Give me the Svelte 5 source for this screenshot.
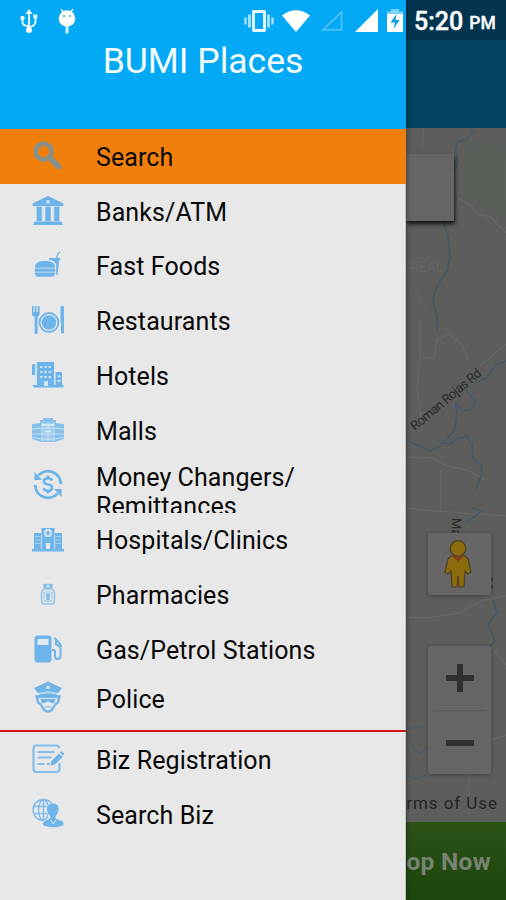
<script lang="ts">
  const places = [
    { icon: 'search', label: 'Search' },
    { icon: 'bank', label: 'Banks/ATM' },
    { icon: 'burger', label: 'Fast Foods' },
    { icon: 'plate', label: 'Restaurants' },
    { icon: 'hotel', label: 'Hotels' },
    { icon: 'mall', label: 'Malls' },
    { icon: 'money', label: 'Money Changers/ Remittances' },
    { icon: 'hospital', label: 'Hospitals/Clinics' },
    { icon: 'pharmacy', label: 'Pharmacies' },
    { icon: 'gas', label: 'Gas/Petrol Stations' },
    { icon: 'police', label: 'Police' },
  ]

  const business = [
    { icon: 'register', label: 'Biz Registration' },
    { icon: 'people', label: 'Search Biz' },
  ]

  let selected = $state('search')
</script>

{#snippet glyph(name: string)}
  <svg class="icon" viewBox="0 0 36 36">
    {#if name === 'search'}
      <circle cx="13.500" cy="13.500" r="8" fill="none" stroke="#86918d" stroke-width="4.400" />
      <path d="M9.500 13.500a4.500 4.500 0 0 1 4-4" fill="none" stroke="#a58c62" stroke-width="1" />
      <path d="M20 20l8.500 8.500" stroke="#86918d" stroke-width="6" stroke-linecap="round" />
    {:else if name === 'bank'}
      <path d="M18 3L33.500 10.500V13h-31v-2.500zM7 14h4.500v14H7zM15.500 14h5v14h-5zM24.500 14H29v14h-4.500zM4.500 28.500h27l1.500 3.500H3z" />
      <path d="M6 12.500h6.500v16H6zM15 12.500h6v16h-6zM23.500 12.500H30v16h-6.500z" opacity=".4" />
      <circle cx="18" cy="9" r="1.900" fill="#c5def1" />
    {:else if name === 'burger'}
      <g transform="translate(0 1)">
        <path d="M5 19.500c0-5 4-6.500 10-6.500s10 1.500 10 6.500zM4.700 21h20.600v2.500H4.700zM5 25h20c0 2.500-1 3.800-3 3.800H8c-2 0-3-1.300-3-3.800z" />
        <path d="M5 19h20v7H5z" opacity=".5" />
        <path d="M18.500 10h11.800v2h-1l-1.800 15h-1.300V17c-.800-3-3-4.500-6.500-5z" />
        <path d="M26.500 10l1-3.500 2.500-2.500" fill="none" stroke="#6cb4ea" stroke-width="1.300" />
      </g>
    {:else if name === 'plate'}
      <g transform="translate(0 1)">
        <path d="M2 3h1.600v6h1.200V3h1.600v6h1.200V3h2v8c0 1.500-1 2.300-2 2.800V30c0 1.500-3 1.500-3 0V13.800C3 13.300 2 12.500 2 11zM30.500 4c.500-2 3.500-1.500 3.500 0v25.500c0 1.500-3 1.500-3 0V19h-.500z" />
        <circle cx="19" cy="19.500" r="7.300" />
        <circle cx="19" cy="19.500" r="9.500" fill="none" stroke="#6cb4ea" stroke-width="1.800" />
      </g>
    {:else if name === 'hotel'}
      <path d="M2 9q0-2 2-2h1.500v11H2zM7 5h17v24H7zM25.500 15h6.500v14h-6.500zM2 28h31.500v2.500H4.500z" />
      <path d="M5.700 8v20M24.700 14v14" stroke="#cfe1ef" stroke-width="1" />
      <path d="M10 10h11M10 15h11M10 20h11" stroke="#cde2f1" stroke-width="2.200" stroke-dasharray="2.500 1.800" />
      <path d="M14 24h4v5h-4zM27.500 18.500h3v1.800h-3zM27.500 23h3v1.800h-3z" fill="#d9e6ef" />
    {:else if name === 'mall'}
      <path d="M13 6h10v2h3v3l8 1v15l-9 3H11l-9-3V12l8-1V8h3z" opacity=".8" />
      <path d="M12 11h12v18H12z" fill="#9fccef" />
      <path d="M2 17l10-1h12l10 1M2 22h32M2 25.500l10 1.500h12l10-1.500M12 10v19M24 10v19M18 10v19" fill="none" stroke="#c9dfee" stroke-width="1" />
      <path d="M12 13h12M15 19.500h6" stroke="#e4edf4" stroke-width="1.500" />
    {:else if name === 'money'}
      <g fill="none" stroke="#6cb4ea" stroke-width="2.900">
        <path d="M8.500 9.500a12.800 12.800 0 0 1 22.300 8.500M27.500 27.500A12.800 12.800 0 0 1 5.200 19" />
        <path d="M22.300 14.500c-1-1.800-2.500-2.300-4.300-2.300-5.500 0-5.500 5.500 0 6.300s5.500 6.300 0 6.300c-2 0-3.600-.800-4.500-2.500M18 9.500V13M18 24v3.500" stroke-width="2.600" />
      </g>
      <path d="M4.500 6v8h7.500zM31.500 31v-8h-7.500z" />
    {:else if name === 'hospital'}
      <path d="M11.500 7h13v22h-13zM4 12h7v17H4zM25 12h7v17h-7zM2 28h32v2.500H2z" />
      <path d="M11.300 14v14M24.700 14v14" stroke="#c8deee" stroke-width="1" />
      <path d="M5 15.500h5M5 19h5M5 22.500h5M26 15.500h5M26 19h5M26 22.500h5" stroke="#a5cfef" stroke-width="1.200" />
      <circle cx="18" cy="12" r="4" fill="#dce8f0" />
      <path d="M18 9.500v5M15.500 12h5" stroke="#6cb4ea" stroke-width="1.600" />
      <path d="M16 22h4v6h-4z" fill="#e5ebef" />
    {:else if name === 'pharmacy'}
      <g fill="none" stroke="#93c4eb" stroke-width="1.500">
        <path d="M14 8.500h8v3h-8zM14.500 13h7c2.500 1 3 3 3 5v6c0 2.500-1 4-3 4h-7c-2 0-3-1.500-3-4v-6c0-2 .500-4 3-5z" />
        <path d="M14 16h8v9h-8z" stroke-width="1" />
      </g>
      <path d="M16 17.500h4V24h-4zM14 8h2.500v3H14zM19.500 8H22v3h-2.500z" opacity=".8" />
    {:else if name === 'gas'}
      <path d="M7.500 4.500h11q3 0 3 3v21q0 3-3 3h-11q-3 0-3-3v-21q0-3 3-3z" />
      <path d="M7.500 8h11v6h-11z" fill="#e2eaf0" />
      <path d="M22 19h1.500q1.500 0 1.500 2v4c0 4 5.500 4 5.500 0V13.500l-6-6.500M26 9.500v4l4 2" fill="none" stroke="#6cb4ea" stroke-width="2" />
    {:else if name === 'police'}
      <path d="M18 1.500l4 2L32 8l-4 5q-10-3-20 0L4 8l10-4.500zM9 13.500q9-2.500 18 0l-.500 4.500h-17z" />
      <circle cx="18" cy="7.500" r="1.800" fill="#e2eaf0" />
      <path d="M9 14q9-2.500 18 0" fill="none" stroke="#dce8f0" stroke-width=".8" />
      <path d="M8.500 15v2l-2-.500 1.500 6 2.500 1.500 3.500 6q4 3 8 0l3.500-6 2.500-1.500 1.500-6-2 .500v-2" fill="none" stroke="#6cb4ea" stroke-width="2.200" />
      <path d="M10.500 19h15l-1 3.500q-3 2-5.500-1h-2q-2.500 3-5.500 1z" />
      <path d="M14 26.500q4-2 8 0v1.200h-8z" opacity=".5" />
    {:else if name === 'register'}
      <g fill="none" stroke="#82bdec" stroke-width="2.200">
        <path d="M29.500 22v6q0 3-3 3h-20q-3 0-3-3V7.500q0-3 3-3h20q2.500 0 3 2.500" />
        <path d="M7.500 11h17M7.500 16.500h14M7.500 23h7M17 23h3" />
      </g>
      <path d="M21.500 20l7.500-7.500 3.500 3.500-7.500 7.500-4.500 1zM30 11.500l1.500-1.500 3 3-1.500 1.500z" />
    {:else}
      <g fill="none" stroke="#7dbbeb" stroke-width="1.400">
        <circle cx="13.500" cy="14" r="10.500" />
        <ellipse cx="13.500" cy="14" rx="5" ry="10.500" />
        <path d="M3.500 10.500h20M3.500 17.500h17M13.500 3.500v21" />
      </g>
      <path d="M23 7c3.500 0 6 2.500 6 6 0 3-1.500 5.500-3 7v2.500l5.500 2c1.500.800 2.500 2 2.500 4.500-5 3.500-16.500 3.500-21.500 0 0-2.500 1-3.700 2.500-4.500l5-2V20c-2-1.500-3.500-4-3.500-7 0-3.500 2.500-6 6.500-6z" stroke="#e8e8e8" stroke-width=".8" />
      <path d="M20.500 24l2.700 4 2.700-4" fill="none" stroke="#d4e4ef" />
    {/if}
  </svg>
{/snippet}

{#snippet row(item: { icon: string; label: string })}
  <li>
    <button
      class={item.icon}
      class:is-selected={item.icon === selected}
      onclick={() => (selected = item.icon)}
    >
      {@render glyph(item.icon)}
      <span>{item.label}</span>
    </button>
  </li>
{/snippet}

<div class="screen">
  <aside class="drawer">
    <header>BUMI Places</header>
    <ul>
      {#each places as item}
        {@render row(item)}
      {/each}
    </ul>
    <hr />
    <ul>
      {#each business as item}
        {@render row(item)}
      {/each}
    </ul>
  </aside>

  <main>
    <div class="toolbar"></div>
    <div class="map">
      <svg class="tiles" viewBox="406 128 100 694">
        <defs>
          <filter id="soft"><feGaussianBlur stdDeviation="5" /></filter>
        </defs>
        <path d="M468 145l25-5 20 15v55l-25 5-22-20z" fill="#596159" filter="url(#soft)" />
        <g fill="none" stroke="#656764" stroke-width="1.500">
          <path d="M424 128l-2 20M458 198l14 8 5 8 14 3 8 9 10 9" />
          <path d="M420 320v38l-3 30 5 40M422 358h12l3-18 12-6 14 12 5 15M480 366l26-22" />
          <path d="M406 457l27 1 14 8 20 4 18 10M441 470v43M406 508l30 3 70 5" />
          <path d="M406 617l20 1 34-5 20-12 26-5M494 650l12 15M490 740l16-5M469 775v40" />
          <path d="M416 290l7 14 6 10M406 270l16-12 18 6" opacity=".5" />
        </g>
        <g fill="none" stroke="#43586a" stroke-width="1.600">
          <path d="M475 130l-8 9-9 3-3 8 3 12-7 16 2 18-8 17-1 12 4 12 2 20-3 14-10 15-4 13 4 18v14" />
          <path d="M506 361l-10 4-10 13-10 4M466 390l5 7 5 4-4 8-8 2-8-7 1 12-3 15-12 12 8 1 8-6 9-2 5 8 1 15 9 7-1 10-6 15" />
          <path d="M406 440l12 5 12 6 10-5M472 508l10 3-16 12M493 600l4 12-9 13 7 16-10 10" />
          <path d="M406 730l9-4 10 2M411 744l8 10 9-8M406 775l10 5 10-5" opacity=".7" />
        </g>
        <text class="road" transform="translate(415 431) rotate(-40)" textLength="88">Roman Rojas Rd</text>
        <text class="road" transform="translate(452 518) rotate(90)">Ma</text>
        <text class="road small" transform="translate(488 577) rotate(90)">a a</text>
        <text class="area" x="410" y="272">REAL</text>
      </svg>
      <div class="info"></div>
      <div class="control pegman">
        <svg width="28" height="48" viewBox="0 0 28 48">
          <g fill="#8b6b0c" stroke="#4d4121" stroke-width="1.200">
            <path d="M7 16h14l3 3 3 13-3 2-3-3-1 16h-5l-1-11-1 11H8L7 31l-3 3-3-2 3-13z" />
            <circle cx="14" cy="8.500" r="7.800" />
          </g>
          <path d="M8 16h12l-6 6z" fill="#803f17" />
        </svg>
      </div>
      <div class="control zoom">
        <button aria-label="Zoom in">
          <svg width="28" height="28" viewBox="0 0 28 28"><path d="M14 0v28M0 14h28" stroke="#303030" stroke-width="6" /></svg>
        </button>
        <button aria-label="Zoom out">
          <svg width="28" height="28" viewBox="0 0 28 28"><path d="M0 14h28" stroke="#303030" stroke-width="6" /></svg>
        </button>
      </div>
      <div class="terms">Terms of Use</div>
    </div>
    <footer>Shop Now</footer>
  </main>

  <div class="status">
    <svg width="18" height="26" viewBox="0 0 18 26">
      <path d="M9 3v19M2.500 9v4q0 3 3 3.500l3.500 1M15.500 8v4q0 4-3 5l-3.500 1.500" fill="none" stroke="#e8faff" stroke-width="1.900" />
      <path d="M9 0l3.500 5h-7z" fill="#e8faff" />
      <circle cx="9" cy="21" r="3" fill="#fff" />
      <circle cx="2.500" cy="9" r="2.200" fill="#e8faff" />
      <path d="M13.300 5.500h4v4h-4z" fill="#e8faff" />
    </svg>
    <svg class="droid" width="18" height="26" viewBox="0 0 18 26">
      <path d="M3 0l3 4M15 0l-3 4" stroke="#fff" stroke-width="1.300" />
      <circle cx="9" cy="9.500" r="8.300" fill="#fff" />
      <path d="M9 17v7.500" stroke="#c9f0ff" stroke-width="3.200" />
      <circle cx="6" cy="7" r="1" fill="#36aede" />
      <circle cx="12" cy="7" r="1" fill="#36aede" />
    </svg>
    <svg class="push" width="30" height="24" viewBox="0 0 30 24">
      <path d="M9.500 2.500h11v19h-11z" fill="none" stroke="#e9fbff" stroke-width="2.800" stroke-linejoin="round" />
      <path d="M5.500 5.500v13M24.500 5.500v13" stroke="#a9e0fa" stroke-width="2.800" />
      <path d="M1.500 8.500v7M28.500 8.500v7" stroke="#a9e0fa" stroke-width="2.400" />
    </svg>
    <svg class="wifi" width="28" height="22" viewBox="0 0 28 22">
      <path d="M0 5.500Q14-5 28 5.500L14 22z" fill="#fff" />
    </svg>
    <svg class="sim" width="23" height="22" viewBox="0 0 23 22">
      <path d="M3 20.800L21.500 3v17.800z" fill="none" stroke="#4cc0f5" stroke-width="1.800" />
    </svg>
    <svg class="signal" width="23" height="23" viewBox="0 0 23 23">
      <path d="M23 0v23H0z" fill="#fff" />
    </svg>
    <svg class="battery" width="16" height="23" viewBox="0 0 16 23">
      <path d="M4 0h8v2.500h4V6H0V2.500h4z" fill="#7bd2f8" />
      <path d="M0 5h16v18H0z" fill="#fff" />
      <path d="M9.500 5L3.500 13.500H8L6.500 20l6-9H8.500z" fill="#079fe0" />
    </svg>
    <span class="clock">5:20</span>
    <span class="meridiem">PM</span>
  </div>
</div>

<style>
:global(body) {
  margin: 0;
}

.screen {
  display: grid;
  font-family: Roboto, "Liberation Sans", sans-serif;
  grid-template-columns: 406px 100px;
  height: 900px;
  overflow: hidden;
  position: relative;
  width: 506px;
}

.drawer {
  background: #e8e8e8;
  box-shadow: inset -1px 0 #c4c4c4, 1px 0 4px rgba(0, 0, 0, 0.35);
  z-index: 1;
}

header {
  background: #03a9f4;
  box-sizing: border-box;
  color: #f4fcff;
  font-size: 35.5px;
  height: 129px;
  line-height: 42px;
  padding-top: 40px;
  text-align: center;
}

ul {
  list-style: none;
  margin: 0;
  padding: 0;
}

button {
  background: none;
  border: 0;
  font: inherit;
  padding: 0;
}

li button {
  align-items: center;
  color: #080808;
  display: flex;
  font-size: 25px;
  gap: 30px;
  height: 54.8px;
  letter-spacing: 0.1px;
  line-height: 29px;
  overflow: hidden;
  padding: 2px 75px 0 30px;
  text-align: left;
  width: 405px;
}

li button.is-selected {
  background: #f07f0b;
  width: 406px;
}

li button.money {
  align-items: flex-start;
  padding-top: 5px;
}

.money .icon {
  margin-top: 3px;
}

li button.police {
  height: 43px;
}

.icon {
  fill: #6cb4ea;
  flex: none;
  height: 36px;
  margin-top: -3px;
  width: 36px;
}

hr {
  background: #d0141c;
  border: 0;
  height: 2px;
  margin: 10px 0 0;
}

main {
  display: flex;
  flex-direction: column;
  overflow: hidden;
}

.toolbar {
  background: #02435f;
  flex: none;
  height: 128px;
}

.map {
  align-items: flex-start;
  background: #5d5e5b;
  display: flex;
  flex: none;
  flex-direction: column;
  height: 694px;
  position: relative;
}

.map > * {
  position: relative;
}

.map .tiles {
  height: 694px;
  left: 0;
  position: absolute;
  top: 0;
  width: 100px;
}

.road {
  fill: #282a2a;
  font-size: 13px;
}

.small {
  font-size: 9px;
}

.area {
  fill: #656664;
  font-size: 14px;
}

.info {
  background: #656565;
  box-shadow: 1px 3px 4px rgba(0, 0, 0, 0.8);
  height: 67px;
  margin-top: 26px;
  width: 48px;
}

.control {
  align-items: center;
  background: #666;
  border-radius: 2px;
  box-shadow: 0 1px 4px rgba(0, 0, 0, 0.3);
  display: flex;
  height: 62px;
  justify-content: center;
  margin: 312px 0 0 22px;
  width: 63px;
}

.pegman {
  box-sizing: border-box;
  padding-right: 3px;
}

.zoom {
  flex-direction: column;
  height: 128px;
  margin-top: 51px;
}

.zoom button {
  align-items: center;
  display: flex;
  height: 64px;
  justify-content: center;
  width: 53px;
}

.zoom button + button {
  border-top: 1px solid #5a5a5a;
}

.terms {
  align-self: flex-end;
  color: #242424;
  font-size: 17px;
  letter-spacing: 0.95px;
  line-height: 20px;
  margin: 19px 8px 0 0;
  white-space: nowrap;
}

footer {
  background: linear-gradient(#2b5117, #1d460c);
  color: #788371;
  display: flex;
  flex: 1;
  font-size: 24.5px;
  font-weight: 700;
  justify-content: flex-end;
  letter-spacing: 0.3px;
  line-height: 76px;
  padding: 2px 15px 0 0;
  white-space: nowrap;
}

.status {
  align-items: flex-start;
  background: linear-gradient(90deg, transparent 406px, rgba(0, 10, 30, 0.25) 406px);
  box-sizing: border-box;
  color: #fff;
  display: flex;
  height: 40px;
  left: 0;
  padding: 9px 0 0 20px;
  position: absolute;
  top: 0;
  width: 506px;
  z-index: 2;
}

.droid {
  margin-left: 20px;
}

.push {
  margin-left: 168px;
}

.wifi {
  margin: 1px 0 0 8px;
}

.sim {
  margin-left: 10px;
}

.signal {
  margin-left: 12px;
}

.battery {
  margin-left: 9px;
}

.clock {
  -webkit-text-stroke: 0.4px #fff;
  font-size: 25px;
  font-weight: 500;
  line-height: 26px;
  margin-left: 11px;
}

.meridiem {
  -webkit-text-stroke: 0.3px #fff;
  font-size: 17.5px;
  font-weight: 500;
  line-height: 29px;
  margin-left: 6px;
}
</style>
